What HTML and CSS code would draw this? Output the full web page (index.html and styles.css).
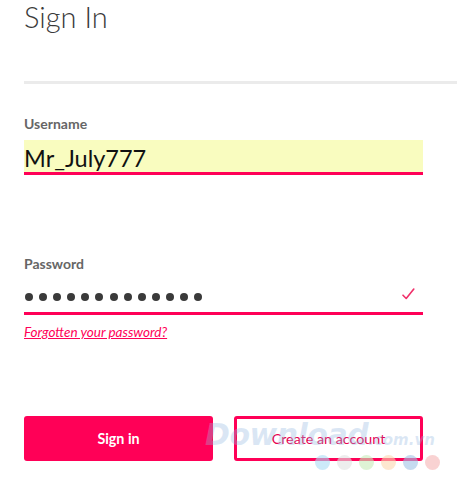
FILE: index.html
```html
<!DOCTYPE html>
<html lang="en">
<head>
<meta charset="utf-8">
<title>Sign In</title>
<link rel="stylesheet" href="styles.css">
</head>
<body>
<main class="page">
  <h1 class="title">Sign In</h1>
  <div class="divider"></div>
  <form class="form">
    <div class="field field-user">
      <label class="label">Username</label>
      <div class="input input-filled">Mr_July777</div>
    </div>
    <div class="field field-pass">
      <label class="label">Password</label>
      <div class="input input-pass">
        <span class="dots">
          <i></i><i></i><i></i><i></i><i></i><i></i><i></i><i></i><i></i><i></i><i></i><i></i><i></i>
        </span>
        <svg class="check" width="13" height="12" viewBox="0 0 13 12"><path d="M1 7.2 L4.2 10.5 L11.8 1" fill="none" stroke="#f0306a" stroke-width="1.6" stroke-linecap="round" stroke-linejoin="round"/></svg>
      </div>
      <a class="forgot" href="#">Forgotten your password?</a>
    </div>
    <div class="actions">
      <button type="button" class="btn btn-primary">Sign in</button>
      <button type="button" class="btn btn-outline">Create an account</button>
    </div>
  </form>
  <div class="watermark">
    <div class="wm-text"><span class="wm-big">Download</span><span class="wm-small">.com.vn</span></div>
    <div class="wm-dots"><i class="c1"></i><i class="c2"></i><i class="c3"></i><i class="c4"></i><i class="c5"></i><i class="c6"></i></div>
  </div>
</main>
</body>
</html>
```
FILE: styles.css
```css
* { box-sizing: border-box; }
html, body { margin: 0; padding: 0; background: #fff; }
body { font-family: Lato, "Open Sans", Arial, sans-serif; color: #222; }
.page { position: relative; padding-left: 24px; width: 457px; height: 484px; overflow: hidden; }
.title {
  margin: 0;
  font-weight: 300;
  font-size: 29px;
  line-height: 34px;
  color: #3a3a3a;
}
.divider { margin-top: 47px; height: 3px; background: #ebebeb; margin-right: -24px; }
.form { width: 399px; }
.field-user { margin-top: 32px; }
.label {
  display: block;
  font-weight: 700;
  font-size: 14px;
  line-height: 16px;
  color: #666;
}
.input {
  margin-top: 8px;
  height: 35px;
  border-bottom: 3px solid #ff0057;
  display: flex;
  align-items: center;
}
.input-filled {
  background: #f9fcbf;
  font-size: 23.5px;
  color: #111;
  padding-top: 3px;
}
.field-pass { margin-top: 81px; }
.input-pass { justify-content: space-between; padding-right: 8px; padding-top: 2px; }
.dots { display: flex; gap: 6.1px; padding-left: 1px; }
.dots i { display: block; width: 8px; height: 8px; border-radius: 50%; background: #3a3a3a; }
.check { display: block; margin-top: -6px; }
.forgot {
  display: inline-block;
  margin-top: 9px;
  font-size: 13.5px;
  font-style: italic;
  color: #ff0057;
  text-decoration: underline;
  line-height: 16px;
}
.actions { display: flex; justify-content: space-between; margin-top: 76px; }
.btn {
  flex: none;
  width: 189px;
  height: 45px;
  margin: 0;
  border-radius: 3px;
  font-family: Lato, Arial, sans-serif;
  font-size: 14.3px;
  cursor: pointer;
}
.btn-primary { background: #ff0057; border: 0; color: #fff; font-weight: 700; }
.btn-outline { background: #fff; border: 3px solid #ff0057; color: #e8004f; font-weight: 400; }
.watermark { position: absolute; left: 205px; top: 420px; pointer-events: none; }
.wm-text { font-family: "DejaVu Sans", Arial, sans-serif; font-style: italic; font-weight: 700; color: rgba(150, 185, 225, 0.35); white-space: nowrap; line-height: 30px; }
.wm-big { font-size: 30px; letter-spacing: -0.5px; }
.wm-small { font-size: 15px; }
.wm-dots { display: flex; gap: 7px; margin-left: 110px; margin-top: 0; }
.wm-dots i { display: block; width: 15px; height: 15px; border-radius: 50%; }
.c1 { background: rgba(170, 220, 245, 0.6); }
.c2 { background: rgba(225, 225, 225, 0.6); }
.c3 { background: rgba(200, 235, 185, 0.6); }
.c4 { background: rgba(252, 215, 175, 0.6); }
.c5 { background: rgba(160, 195, 230, 0.6); }
.c6 { background: rgba(245, 180, 180, 0.6); }
```
